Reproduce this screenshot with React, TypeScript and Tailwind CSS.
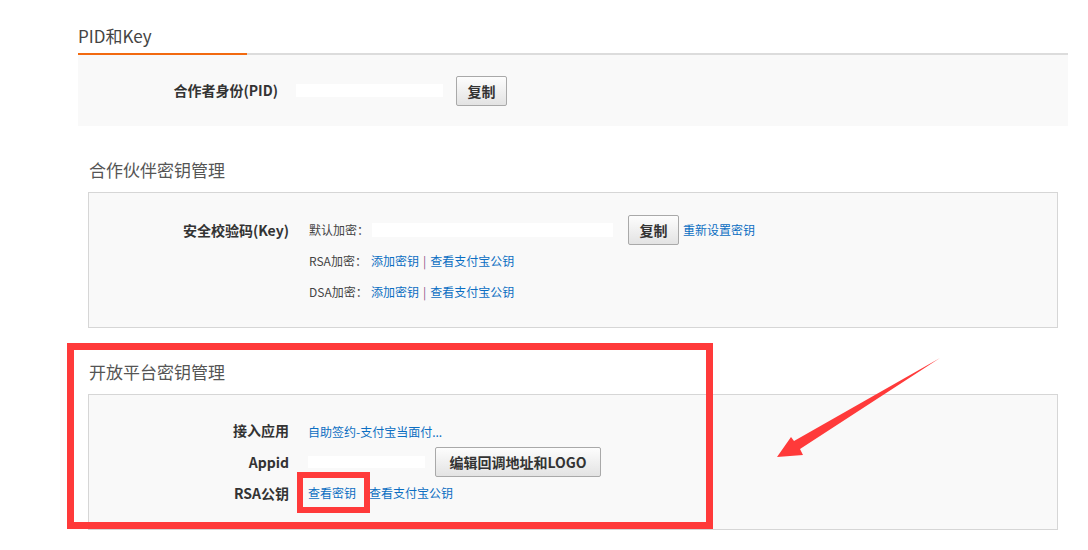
import React from 'react';

const font = { fontFamily: '"Noto Sans CJK SC", "Noto Sans", sans-serif' };

function CopyButton({ children, className = '' }: { children: React.ReactNode; className?: string }) {
  return (
    <button
      className={`h-[30px] shrink-0 rounded-[2px] border border-[#a9a9a9] bg-gradient-to-b from-[#fdfdfd] to-[#e3e3e3] text-[14px] font-bold leading-none text-[#333] ${className}`}
    >
      {children}
    </button>
  );
}

function Link({ children }: { children: React.ReactNode }) {
  return <a className="cursor-pointer text-[12px] text-[#0b6ec2]">{children}</a>;
}

function SectionTitle({ children }: { children: React.ReactNode }) {
  return (
    <div className="pl-[11px] pt-[34px] pb-[12px] text-[17px] leading-[20px] text-[#555]">{children}</div>
  );
}

export default function App() {
  return (
    <div className="relative min-h-[550px] w-[1088px] bg-white" style={font}>
      <div className="ml-[78px] w-[990px]">
        {/* tab header */}
        <div className="flex border-b-2 border-[#dcdcdc]">
          <div className="-mb-[2px] w-[169px] border-b-2 border-[#f26a10] pt-[26px] pb-[7px] text-[17px] leading-[20px] text-[#444]">
            PID和Key
          </div>
        </div>

        {/* PID panel */}
        <div className="flex h-[71px] items-center bg-[#f9f9f9]">
          <div className="w-[200px] text-right text-[14px] font-bold text-[#333]">合作者身份(PID)</div>
          <div className="ml-[18px] h-[13px] w-[147px] bg-white" />
          <CopyButton className="ml-[13px] w-[51px]">复制</CopyButton>
        </div>

        <SectionTitle>合作伙伴密钥管理</SectionTitle>

        <div className="mx-[10px] flex border border-[#d6d6d6] bg-[#f9f9f9] pt-[22px] pb-[20px]">
          <div className="flex h-[30px] w-[200px] items-center justify-end text-[14px] font-bold text-[#333]">
            安全校验码(Key)
          </div>
          <div className="ml-[20px] flex flex-col text-[12px] text-[#444]">
            <div className="flex h-[30px] items-center">
              <span className="w-[63px]">默认加密：</span>
              <div className="h-[14px] w-[241px] bg-white" />
              <CopyButton className="ml-[15px] w-[51px]">复制</CopyButton>
              <span className="ml-[4px]">
                <Link>重新设置密钥</Link>
              </span>
            </div>
            <div className="flex h-[31px] items-center">
              <span className="w-[62px]">RSA加密：</span>
              <Link>添加密钥</Link>
              <span className="mx-[4px] text-[#8a5a8a]">|</span>
              <Link>查看支付宝公钥</Link>
            </div>
            <div className="flex h-[31px] items-center">
              <span className="w-[62px]">DSA加密：</span>
              <Link>添加密钥</Link>
              <span className="mx-[4px] text-[#8a5a8a]">|</span>
              <Link>查看支付宝公钥</Link>
            </div>
          </div>
        </div>

        <SectionTitle>开放平台密钥管理</SectionTitle>

        <div className="mx-[10px] flex flex-col border border-[#d6d6d6] bg-[#f9f9f9] pt-[25px] pb-[26px]">
          <div className="flex h-[20px] items-center">
            <div className="w-[200px] text-right text-[14px] font-bold text-[#333]">接入应用</div>
            <div className="ml-[19px]">
              <Link>自助签约-支付宝当面付...</Link>
            </div>
          </div>
          <div className="mt-[7px] flex h-[30px] items-center">
            <div className="w-[200px] text-right text-[14px] font-bold text-[#333]">Appid</div>
            <div className="ml-[19px] h-[12px] w-[117px] bg-white" />
            <CopyButton className="ml-[10px] w-[166px]">编辑回调地址和LOGO</CopyButton>
          </div>
          <div className="mt-[6px] flex h-[20px] items-center">
            <div className="w-[200px] text-right text-[14px] font-bold text-[#333]">RSA公钥</div>
            <div className="ml-[19px] flex gap-[13px]">
              <Link>查看密钥</Link>
              <Link>查看支付宝公钥</Link>
            </div>
          </div>
        </div>
      </div>

      {/* annotations */}
      <div className="pointer-events-none absolute left-[67px] top-[343px] h-[186px] w-[646px] border-[7px] border-[#ff3a3a]" />
      <div className="pointer-events-none absolute left-[297px] top-[472px] h-[41px] w-[73px] border-[6px] border-[#ff3a3a]" />
      <svg className="pointer-events-none absolute left-0 top-0" width="1088" height="550">
        <polygon
          points="777,457 791,437 794,441 940,358 800,449 803,455"
          fill="#ff3a3a"
        />
      </svg>
    </div>
  );
}
